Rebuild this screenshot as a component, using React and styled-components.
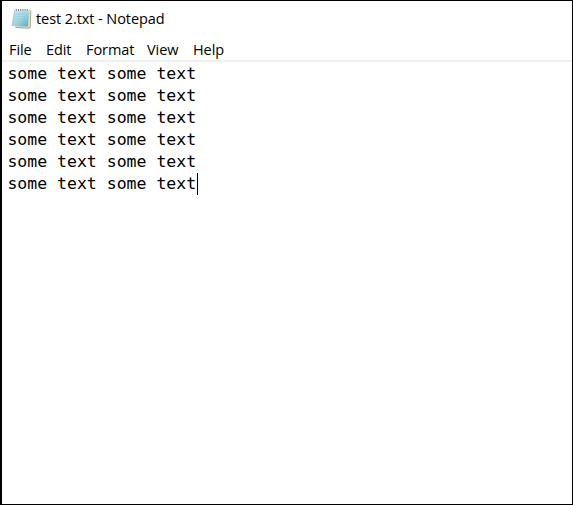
import React from 'react';
import styled, { createGlobalStyle } from 'styled-components';

const Global = createGlobalStyle`
  * { box-sizing: border-box; }
  body { margin: 0; background: #fff; }
`;
const Window = styled.main`
  width: 573px; height: 505px; display: flex; flex-direction: column;
  border: 1px solid #000; border-left-width: 2px; background: #fff;
  color: #000; font-family: "Open Sans", "Noto Sans", sans-serif; overflow: hidden;
`;
const TitleBar = styled.header`
  height: 35px; flex: none; display: flex; align-items: center; padding-left: 9px; gap: 4px;
`;
const Title = styled.h1`
  margin: 0; font-size: 14.5px; letter-spacing: -0.08px; font-weight: 400; line-height: 20px; white-space: pre;
`;
const MenuBar = styled.nav`
  height: 26px; flex: none; display: flex; align-items: center; padding: 3px 0 0 7px; gap: 14px;
  border-bottom: 2px solid #f0f0f0;
`;
const MenuItem = styled.span`
  font-size: 14.5px; letter-spacing: -0.08px; line-height: 21px; width: ${p => p.$w}px; white-space: nowrap;
`;
const Editor = styled.section`
  flex: 1; padding: 1px 0 0 5.4px; font-family: "DejaVu Sans Mono", monospace; font-size: 16.5px;
`;
const Line = styled.div`
  height: 22px; line-height: 22px; display: flex; align-items: center; white-space: pre;
`;
const Caret = styled.span`width: 1px; height: 22px; margin-left: 0.6px; background: #000;`;
const Icon = styled.svg`flex: none; margin-bottom: 1px;`;

const NotepadIcon = () => (
  <Icon width="21" height="22" viewBox="0 0 21 22" aria-hidden="true">
    <defs>
      <linearGradient id="pad" x1="0" y1="0" x2="1" y2="1">
        <stop offset="0" stopColor="#c3e7ee" />
        <stop offset=".5" stopColor="#a3d9e5" />
        <stop offset="1" stopColor="#56adc0" />
      </linearGradient>
    </defs>
    <path d="M5 3H18.8L19.8 4.2 19.2 20.8 17 21.4 4 20.4Z" fill="#e8dbc2" />
    <path d="M19 3.2 19.8 4.2 19.2 20.8 16.5 21.2 4.5 20.5" fill="none" stroke="#a89468" strokeWidth=".8" />
    <path d="M3.8 3H18.2L16.9 19.7 1 19Z" fill="url(#pad)" />
    <path d="M3.8 3.2 1.2 18.8" stroke="#78b9c8" strokeWidth=".6" />
    <path d="M3.4 7H17.6M3 9.5H17.3M2.5 12H17M2.1 14.5H16.9M1.7 17H16.6" stroke="#70b8c9" strokeWidth=".35" opacity=".65" />
    <path d="M4 3.4H18.2" stroke="#e5f1f2" strokeWidth="1.4" />
    <path d="M5.3 2V3.9M7.5 2V3.9M9.7 2V3.9M11.9 2V3.9M14.1 2V3.9M16.3 2V3.9" stroke="#6f7c80" strokeWidth="1" />
  </Icon>
);
const menus = [['File', 23], ['Edit', 26], ['Format', 47], ['View', 32], ['Help', 32]];
const lines = Array(6).fill('some text some text');

export default function App() {
  return (
    <><Global /><Window>
      <TitleBar><NotepadIcon /><Title>test 2.txt - Notepad</Title></TitleBar>
      <MenuBar>{menus.map(([m, w]) => <MenuItem key={m} $w={w}>{m}</MenuItem>)}</MenuBar>
      <Editor>{lines.map((t, i) => <Line key={i}>{t}{i === 5 && <Caret />}</Line>)}</Editor>
    </Window></>
  );
}
